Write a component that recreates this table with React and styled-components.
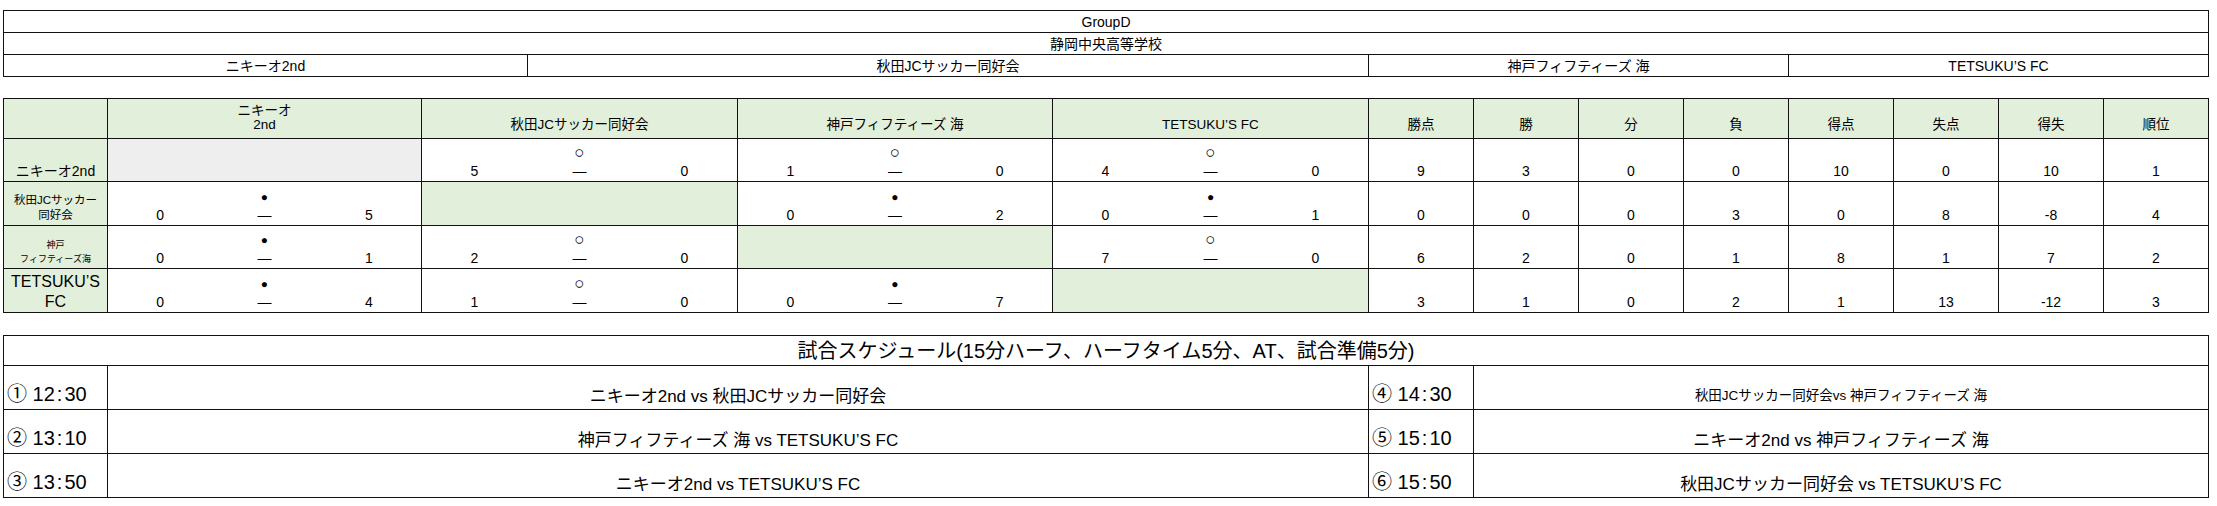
import React from 'react'
import styled, { createGlobalStyle } from 'styled-components'

const GlobalStyle = createGlobalStyle`
  body {
    margin: 0;
    background: #fff;
    color: #000;
    font-family: "Liberation Sans", "Noto Sans CJK JP", sans-serif;
  }
`

const Page = styled.div`
  display: flex;
  flex-direction: column;
  padding: 10px 0 0 3px;
  width: 2206px;
`

const Sheet = styled.table`
  border-collapse: collapse;
  table-layout: fixed;
  width: 2206px;
  margin-bottom: ${p => p.$gap || 0}px;
`

const Row = styled.tr`
  height: ${p => p.$h}px;
`

const cellBg = bg => (bg === 'green' ? '#e2efda' : bg === 'gray' ? '#eeeeee' : '#fff')

const InfoCell = styled.td`
  border: 1px solid #111;
  padding: 0;
  text-align: center;
  vertical-align: middle;
  font-size: 14px;
  line-height: 20px;
  white-space: nowrap;
`

const HeadCell = styled.th`
  border: 1px solid #111;
  padding: 0 2px 6px;
  background: #e2efda;
  font-weight: normal;
  text-align: center;
  vertical-align: bottom;
  font-size: 13.5px;
  line-height: 14px;
  white-space: pre-line;
`

const TeamCell = styled.td`
  border: 1px solid #111;
  padding: 0 0 ${p => p.$pb}px;
  background: #e2efda;
  text-align: center;
  vertical-align: bottom;
  font-size: ${p => p.$size}px;
  line-height: ${p => p.$lh}px;
  white-space: pre-line;
`

const ScoreCell = styled.td`
  border: 1px solid #111;
  padding: 0 0 1px;
  background: ${p => cellBg(p.$bg)};
  vertical-align: bottom;
`

const ScoreGrid = styled.div`
  display: grid;
  grid-template-columns: repeat(3, 1fr);
  grid-template-rows: 18px 18px;
  font-size: 14px;
  line-height: 18px;
  text-align: center;
`

const Mark = styled.span`
  grid-column: 2;
  grid-row: 1;
  font-size: ${p => (p.$filled ? 12 : 17)}px;
  line-height: 18px;
`

const Num = styled.span`
  grid-row: 2;
`

const StatCell = styled.td`
  border: 1px solid #111;
  padding: 0 0 1px;
  text-align: center;
  vertical-align: bottom;
  font-size: 14px;
  line-height: 18px;
`

const TitleCell = styled.td`
  border: 1px solid #111;
  padding: 0;
  text-align: center;
  vertical-align: middle;
  font-size: 20px;
  line-height: 26px;
`

const TimeCell = styled.td`
  border: 1px solid #111;
  padding: 0 0 3px 3px;
  text-align: left;
  vertical-align: bottom;
  font-size: 20px;
  line-height: 24px;
  white-space: nowrap;
`

const Colon = styled.span`
  margin: 0 2px;
`

const MatchCell = styled.td`
  border: 1px solid #111;
  padding: 0 0 ${p => (p.$small ? 3 : 2)}px;
  text-align: center;
  vertical-align: bottom;
  font-size: ${p => (p.$small ? 13.5 : 17)}px;
  line-height: 20px;
  white-space: nowrap;
`

const teams = ['ニキーオ2nd', '秋田JCサッカー同好会', '神戸フィフティーズ 海', 'TETSUKU’S FC']

const headers = ['', 'ニキーオ\n2nd', '秋田JCサッカー同好会', '神戸フィフティーズ 海', 'TETSUKU’S FC',
  '勝点', '勝', '分', '負', '得点', '失点', '得失', '順位']

const rows = [
  { label: 'ニキーオ2nd', size: 14, lh: 18, pb: 1, h: 43,
    results: [null, ['○', 5, 0], ['○', 1, 0], ['○', 4, 0]], selfBg: 'gray',
    stats: [9, 3, 0, 0, 10, 0, 10, 1] },
  { label: '秋田JCサッカー\n同好会', size: 11.5, lh: 15, pb: 2, h: 44,
    results: [['●', 0, 5], null, ['●', 0, 2], ['●', 0, 1]], selfBg: 'green',
    stats: [0, 0, 0, 3, 0, 8, -8, 4] },
  { label: '神戸\nフィフティーズ海', size: 9, lh: 14, pb: 2, h: 43,
    results: [['●', 0, 1], ['○', 2, 0], null, ['○', 7, 0]], selfBg: 'green',
    stats: [6, 2, 0, 1, 8, 1, 7, 2] },
  { label: 'TETSUKU’S\nFC', size: 16, lh: 20, pb: 0, h: 44,
    results: [['●', 0, 4], ['○', 1, 0], ['●', 0, 7], null], selfBg: 'green',
    stats: [3, 1, 0, 2, 1, 13, -12, 3] },
]

const schedule = [
  [{ no: '①', h: '12', m: '30', match: 'ニキーオ2nd vs 秋田JCサッカー同好会' },
    { no: '④', h: '14', m: '30', match: '秋田JCサッカー同好会vs 神戸フィフティーズ 海', small: true }],
  [{ no: '②', h: '13', m: '10', match: '神戸フィフティーズ 海 vs TETSUKU’S FC' },
    { no: '⑤', h: '15', m: '10', match: 'ニキーオ2nd vs 神戸フィフティーズ 海' }],
  [{ no: '③', h: '13', m: '50', match: 'ニキーオ2nd vs TETSUKU’S FC' },
    { no: '⑥', h: '15', m: '50', match: '秋田JCサッカー同好会 vs TETSUKU’S FC' }],
]

const Score = ({ result, bg }) => (
  <ScoreCell $bg={result ? 'white' : bg}>
    {result && (
      <ScoreGrid>
        <Mark $filled={result[0] === '●'}>{result[0]}</Mark>
        <Num>{result[1]}</Num>
        <Num>—</Num>
        <Num>{result[2]}</Num>
      </ScoreGrid>
    )}
  </ScoreCell>
)

const Time = ({ no, h, m }) => (
  <TimeCell>
    {no} {h}<Colon>:</Colon>{m}
  </TimeCell>
)

export default function App() {
  return (
    <Page>
      <GlobalStyle />
      <Sheet $gap={21}>
        <colgroup>
          <col style={{ width: 524 }} />
          <col style={{ width: 841 }} />
          <col style={{ width: 420 }} />
          <col style={{ width: 420 }} />
        </colgroup>
        <tbody>
          <Row $h={22}><InfoCell colSpan={4}>GroupD</InfoCell></Row>
          <Row $h={22}><InfoCell colSpan={4}>静岡中央高等学校</InfoCell></Row>
          <Row $h={22}>
            {teams.map(t => <InfoCell key={t}>{t}</InfoCell>)}
          </Row>
        </tbody>
      </Sheet>

      <Sheet $gap={22}>
        <colgroup>
          {[104, 314, 316, 315, 316, 105, 105, 105, 105, 105, 105, 105, 105].map((w, i) => (
            <col key={i} style={{ width: w }} />
          ))}
        </colgroup>
        <thead>
          <Row $h={40}>
            {headers.map((h, i) => <HeadCell key={i}>{h}</HeadCell>)}
          </Row>
        </thead>
        <tbody>
          {rows.map(r => (
            <Row key={r.label} $h={r.h}>
              <TeamCell $size={r.size} $lh={r.lh} $pb={r.pb}>{r.label}</TeamCell>
              {r.results.map((res, i) => <Score key={i} result={res} bg={r.selfBg} />)}
              {r.stats.map((s, i) => <StatCell key={i}>{s}</StatCell>)}
            </Row>
          ))}
        </tbody>
      </Sheet>

      <Sheet>
        <colgroup>
          <col style={{ width: 104 }} />
          <col style={{ width: 1261 }} />
          <col style={{ width: 105 }} />
          <col style={{ width: 735 }} />
        </colgroup>
        <tbody>
          <Row $h={30}>
            <TitleCell colSpan={4}>試合スケジュール(15分ハーフ、ハーフタイム5分、AT、試合準備5分)</TitleCell>
          </Row>
          {schedule.map((pair, i) => (
            <Row key={i} $h={44}>
              <Time {...pair[0]} />
              <MatchCell>{pair[0].match}</MatchCell>
              <Time {...pair[1]} />
              <MatchCell $small={pair[1].small}>{pair[1].match}</MatchCell>
            </Row>
          ))}
        </tbody>
      </Sheet>
    </Page>
  )
}
